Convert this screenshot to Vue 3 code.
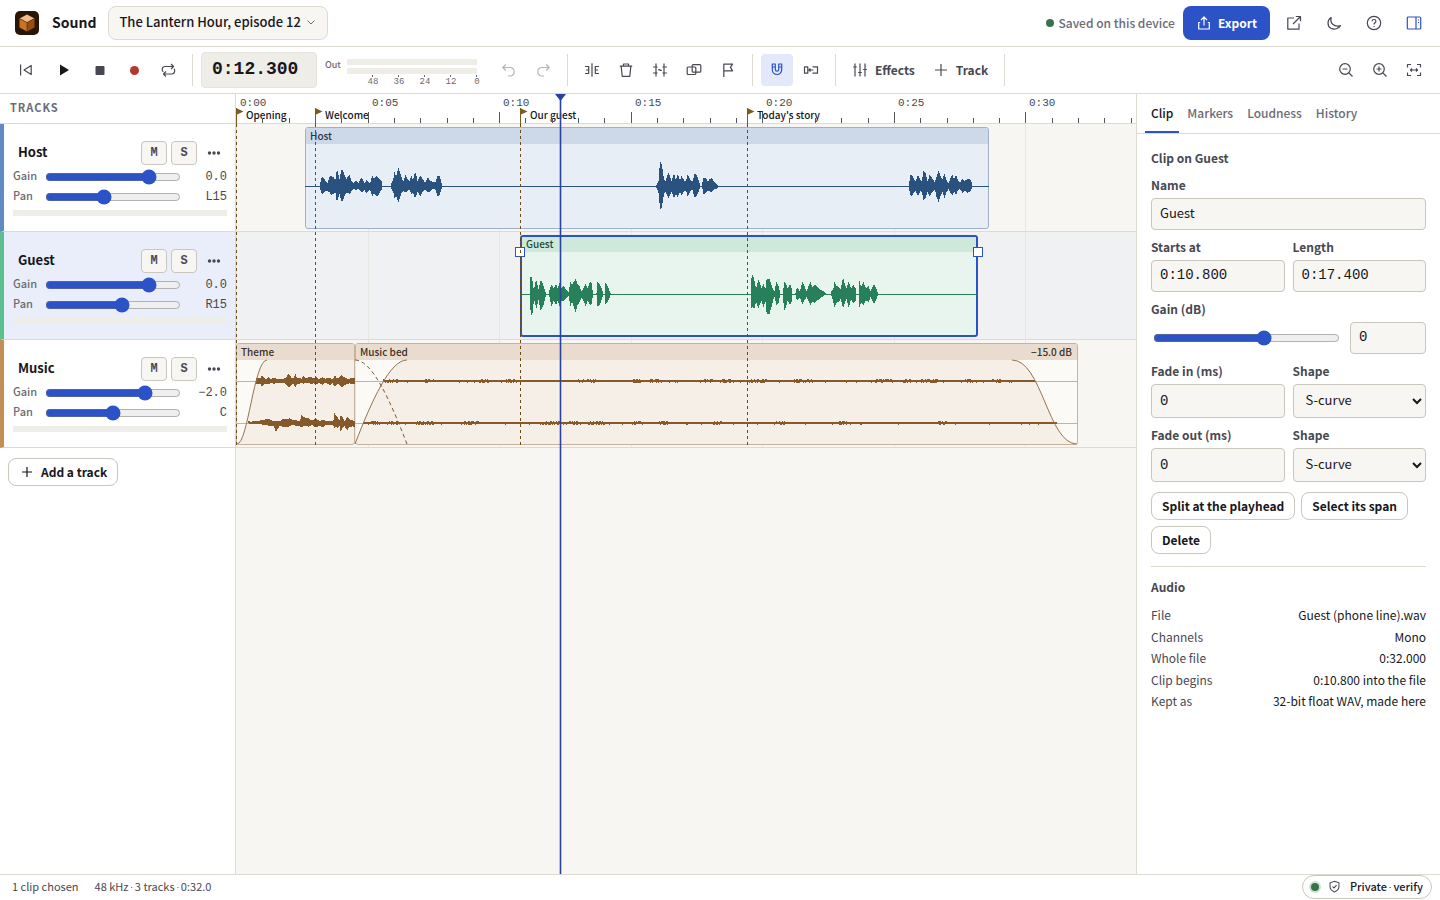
<script setup>
import { ref } from 'vue'

const PX_PER_SECOND = 900 / 34.2
const at = (seconds) => Math.round(seconds * PX_PER_SECOND)

const ticks = Array.from({ length: 35 }, (_, second) => ({
  x: at(second),
  major: second % 5 === 0,
  label: '0:' + String(second).padStart(2, '0')
}))

const markers = [
  { name: 'Opening', time: 0 },
  { name: 'Welcome', time: 3 },
  { name: 'Our guest', time: 10.8 },
  { name: "Today's story", time: 19.4 }
]
const playhead = 12.3

// Peak lists are flat triples: position, upper edge, lower edge, in thirds of a pixel.
const hostPeaks = [
  [0, 252,275,290,258,252,308,262,258,305,268,265,298,275,272,298,280,255,300,286,252,308,292,255,306,298,265,300,302,235,328,306,240,322,310,262,305,317,232,330,321,236,325,326,250,310,331,262,303,336,252,302,341,250,305,346,265,298,352,272,290,360,265,295,368,272,290,376,258,300,382,265,298,386,275,292,391,263,305,396,268,298,402,275,292,409,250,312,414,260,305,420,252,312,426,255,310,432,262,300,438,270,292],
  [0, 466,275,290,472,262,300,476,238,320,480,255,312,487,226,332,492,240,318,496,255,305,502,268,298,509,248,300,514,262,298,520,268,292,526,250,308,531,265,300,537,240,320,541,250,310,545,268,298,553,250,312,560,262,300,568,272,292,575,256,302,582,265,298,590,270,290,598,272,292,605,250,312,610,252,310,614,262,298,618,278,288],
  [762, 500,280,288,506,265,305,510,205,350,514,215,350,518,232,330,522,262,305,526,270,298,535,243,318,541,255,308,545,268,298,552,243,320,558,265,305,563,246,315,570,265,300,575,252,310,582,265,298,588,268,295,593,248,315,600,262,300,607,268,292,614,245,318,620,250,310,625,262,300,629,275,290],
  [762, 636,280,288,638,268,292,641,255,310,648,260,302,654,268,295,658,262,298,665,258,300,672,268,292,680,275,290,684,282,285],
  [1512, 507,278,290,511,250,310,516,248,312,522,262,300,527,268,296,534,248,312,541,262,298,545,268,300,551,234,325,557,245,318,563,268,300,569,248,312,576,258,300,585,272,292,588,258,310,596,235,330,603,255,308,608,262,300,613,243,318,620,265,300,626,275,290,630,262,300,637,248,310,642,262,298,648,248,308,654,265,295,660,272,290,667,260,302,674,268,296,682,260,302,690,262,300,695,272,290]
]
const guestPeaks = [
  [762, 120,600,610,121,555,650,124,553,672,128,570,660,131,590,630,135,580,625,138,562,655,142,575,640,146,595,620,150,570,650,153,565,655,158,575,645,163,590,630,168,604,608],
  [762, 177,600,610,180,590,622,185,578,645,191,590,625,198,575,640,203,590,625,209,570,642,215,590,625,220,582,628,228,592,620,236,600,612,241,568,642,246,580,630,250,572,640,257,560,660,262,575,640,268,582,632,275,598,618,280,590,625,287,575,642,293,590,625,300,570,640,305,575,635,309,604,608],
  [762, 320,604,608,322,568,642,328,575,640,333,585,630,338,598,612,339,604,608],
  [762, 345,604,608,346,573,638,352,580,632,357,592,622,361,604,608],
  [1512, 33,600,612,34,560,650,38,548,645,42,560,652,48,590,630,55,563,650,60,575,635,65,590,625,70,575,648,76,590,625,80,562,665,88,560,668,93,575,650,98,590,630,103,600,612,109,568,640,115,580,635,120,600,612],
  [1512, 129,602,610,130,590,630,133,570,655,138,575,645,143,590,625,150,575,638,155,588,630,156,604,608],
  [1512, 167,604,608,170,588,625,175,590,620,180,598,615,187,570,638,193,582,625,200,598,615,211,568,640,217,585,630,225,578,632,232,585,625,240,592,620,250,598,612,258,604,608],
  [1512, 273,604,608,274,598,612,280,590,630,283,570,645,290,582,632,297,585,628,302,592,620,309,556,648,314,575,635,319,590,620,326,568,648,333,590,622,340,578,635,347,590,625,348,604,608],
  [1512, 357,604,608,358,566,645,363,585,630,370,570,640,378,590,625,385,582,630,392,598,615,402,576,635,408,588,625,413,600,612]
]
const themePeaks = [
  [0, 62,128,148,68,130,146,74,128,148,78,122,155,84,128,148,90,132,146,98,126,148,105,132,144,115,128,146,125,132,143,135,132,144,145,130,145,152,125,150,158,115,157,163,122,154,168,130,148,174,130,148,178,115,158,182,128,148,190,128,146,196,132,143,202,124,146,210,130,144,218,126,145,225,126,146,234,130,145,240,126,148,250,132,144,260,126,150,268,132,143,276,128,148,283,130,150,290,132,145,297,122,155,303,130,148,310,128,148,317,120,157,324,126,152,330,130,148,340,132,145,348,128,148,355,130,146],
  [0, 38,258,265,45,260,268,55,257,266,65,258,268,75,256,268,85,254,270,100,250,272,106,256,274,112,258,272,120,258,290,126,258,280,132,258,272,140,252,276,150,252,276,160,250,274,170,255,270,180,256,272,192,258,274,196,240,276,202,246,274,210,248,272,218,250,276,224,254,272,230,256,270,236,252,276,242,252,276,250,258,272,260,254,276,270,258,270,280,258,270,292,258,270,295,232,280,300,242,276,306,248,278,310,258,272,314,240,290,320,248,278,326,258,274,334,244,286,340,252,276,345,256,278,350,256,274,355,258,276]
]

const noise = (n) => {
  const value = Math.sin(n * 127.1) * 43758.5453
  return value - Math.floor(value)
}

// One column per pixel: the edges are interpolated between the listed peaks.
function peakPath(bursts, top) {
  return bursts
    .map(([offset, ...values]) => {
      const points = []
      for (let i = 0; i < values.length; i += 3) {
        points.push([(values[i] + offset) / 3, values[i + 1] / 3 - top, values[i + 2] / 3 - top])
      }
      let path = ''
      let k = 0
      const last = points[points.length - 1][0]
      for (let x = Math.floor(points[0][0]); x < last; x += 1) {
        const centre = Math.max(x + 0.5, points[0][0])
        while (k < points.length - 2 && points[k + 1][0] < centre) k += 1
        const [x0, up0, low0] = points[k]
        const [x1, up1, low1] = points[k + 1]
        const t = Math.min(1, (centre - x0) / (x1 - x0))
        const up = Math.round(up0 + (up1 - up0) * t)
        const low = Math.round(low0 + (low1 - low0) * t)
        path += `M${x} ${up}h1V${Math.max(low, up + 1)}h-1Z`
      }
      return path
    })
    .join('')
}

// The music bed is quiet: a thin band with small irregular swells.
function bedPath(from, to, mid, seed) {
  let path = ''
  for (let x = from; x <= to; x += 1) {
    const swell = noise(Math.floor(x / 9) + seed) > 0.72 ? 1 : 0
    const up = swell && noise(x + seed) > 0.45 ? 1 : 0
    const low = (swell || noise(x / 3 + seed) > 0.85) && noise(x * 2 + seed) > 0.5 ? 1 : 0
    path += `M${x} ${mid - 1 - up}h1v${2 + up + low}h-1Z`
  }
  return path
}

const hostWave = peakPath(hostPeaks, 32)
const guestWave = peakPath(guestPeaks, 140)
const musicWave = peakPath(themePeaks, 5) + bedPath(147, 798, 41, 3) + bedPath(127, 820, 83, 40)

const tracks = ref([
  {
    name: 'Host', tone: 'host', gain: 0, gainText: '0.0', pan: -15, panText: 'L15',
    clips: [{ name: 'Host', start: 2.62, end: 28.6 }],
    lines: [{ y: 62, from: 2.62, to: 28.6 }], wave: hostWave, fades: []
  },
  {
    name: 'Guest', tone: 'guest', gain: 0, gainText: '0.0', pan: 15, panText: 'R15', selected: true,
    clips: [{ name: 'Guest', start: 10.8, end: 28.2, selected: true }],
    lines: [{ y: 62, from: 10.8, to: 28.2 }], wave: guestWave, fades: []
  },
  {
    name: 'Music', tone: 'music', gain: -2, gainText: '−2.0', pan: 0, panText: 'C',
    clips: [
      { name: 'Theme', start: 0, end: 4.52 },
      { name: 'Music bed', start: 4.52, end: 32, gain: '−15.0 dB' }
    ],
    lines: [{ y: 41, from: 0, to: 32 }, { y: 83, from: 0, to: 32 }],
    wave: musicWave,
    fades: [
      { shade: 'M1 104C12 104 18 20 31 20H1Z', edge: 'M1 104C12 104 18 20 31 20' },
      { shade: 'M119 104C136 60 154 20 171 20H119Z', edge: 'M119 104C136 60 154 20 171 20' },
      { shade: 'M776 20C806 20 812 104 841 104V20Z', edge: 'M776 20C806 20 812 104 841 104' }
    ],
    crossfade: 'M119 20C136 20 154 60 171 104'
  }
])

const tabs = ['Clip', 'Markers', 'Loudness', 'History']
const facts = [
  ['File', 'Guest (phone line).wav'],
  ['Channels', 'Mono'],
  ['Whole file', '0:32.000'],
  ['Clip begins', '0:10.800 into the file'],
  ['Kept as', '32-bit float WAV, made here']
]
const clipName = ref('Guest')
const startsAt = ref('0:10.800')
const lengthText = ref('0:17.400')
const clipGain = ref(0)
const fadeIn = ref('0')
const fadeOut = ref('0')
const meterScale = ['48', '36', '24', '12', '0']
</script>

<template>
  <div class="app">
    <header class="header">
      <svg class="logo" viewBox="0 0 24 24" aria-hidden="true">
        <rect width="24" height="24" rx="5" fill="#2a1606" />
        <path d="M12 3.5L19.5 7.5L12 11.5L4.5 7.5Z" fill="#f3b98a" />
        <path d="M4.5 7.5L12 11.5V20.5L4.5 16.5Z" fill="#c87423" />
        <path d="M19.5 7.5L12 11.5V20.5L19.5 16.5Z" fill="#95500f" />
        <path d="M4.5 7.5L12 11.5L19.5 7.5M12 11.5V20.5" fill="none" stroke="#4a2608" stroke-width=".6" />
      </svg>
      <h1 class="brand">Sound</h1>
      <button class="project" type="button">
        The Lantern Hour, episode 12
        <svg class="chevron" viewBox="0 0 12 12"><path d="M2.5 4.5L6 8L9.5 4.5" /></svg>
      </button>
      <div class="header-end">
        <span class="saved"><i class="dot"></i>Saved on this device</span>
        <button class="export" type="button">
          <svg class="icon" viewBox="0 0 16 16"><path d="M8 10.5V2.2M5 5L8 2L11 5M4.2 7.5H2.7V14H13.3V7.5H11.8" /></svg>
          Export
        </button>
        <button class="tool" type="button" aria-label="Open in a new window">
          <svg class="icon" viewBox="0 0 16 16"><path d="M8 3H1.8V14.2H13V8.5M9.8 1.5H14.5V6.2M14.5 1.5L7 9" /></svg>
        </button>
        <button class="tool" type="button" aria-label="Dark theme">
          <svg class="icon" viewBox="0 0 16 16"><path d="M5.2 2.6C1 5 1 11 4.8 13.2C8.5 15.2 12.8 13.6 14.4 10.6C8.5 12.6 3.6 8.4 5.2 2.6Z" /></svg>
        </button>
        <button class="tool" type="button" aria-label="Help">
          <svg class="icon" viewBox="0 0 16 16"><circle cx="8" cy="8" r="6.7" /><path d="M6.1 6.3C6.1 3.9 9.9 3.9 9.9 6.3C9.9 7.8 8 7.8 8 9.5M8 11V12" /></svg>
        </button>
        <button class="tool accent" type="button" aria-label="Inspector">
          <svg class="icon" viewBox="0 0 16 16"><rect x="1.3" y="2" width="13.4" height="12" rx="1" /><path d="M10 2V14M12 5H13M12 7.5H13" /></svg>
        </button>
      </div>
    </header>

    <div class="toolbar">
      <div class="group">
        <button class="tool" type="button" aria-label="To the start">
          <svg class="icon" viewBox="0 0 16 16"><path d="M2.6 2.5V13.5M13.2 3.5V12.5L6 8Z" /></svg>
        </button>
        <button class="tool play" type="button" aria-label="Play">
          <svg class="icon" viewBox="0 0 16 16"><path d="M5 2.5V13.5L14 8Z" class="solid" /></svg>
        </button>
        <button class="tool" type="button" aria-label="Stop">
          <svg class="icon" viewBox="0 0 16 16"><rect x="3.5" y="4" width="9" height="9" rx="1" class="solid" /></svg>
        </button>
        <button class="tool record" type="button" aria-label="Record">
          <svg class="icon" viewBox="0 0 16 16"><circle cx="8.5" cy="8.5" r="4.5" class="solid" /></svg>
        </button>
        <button class="tool" type="button" aria-label="Loop">
          <svg class="icon" viewBox="0 0 16 16"><path d="M11 2L13.5 4.5L11 7M13.5 4.5H5C1.6 4.5 1.6 9 3.4 9.8M6 14.5L3.5 12L6 9.5M3.5 12H12C15.2 12 15.2 7.6 13.8 6.8" /></svg>
        </button>
      </div>
      <span class="rule"></span>
      <output class="clock">0:12.300</output>
      <div class="out">
        <span class="out-name">Out</span>
        <div class="out-meter">
          <i class="bar"></i>
          <i class="bar"></i>
          <div class="scale"><span v-for="mark in meterScale" :key="mark">{{ mark }}</span></div>
        </div>
      </div>
      <div class="group">
        <button class="tool" type="button" aria-label="Undo" disabled>
          <svg class="icon" viewBox="0 0 16 16"><path d="M4.8 2.5L1.8 5.5L4.8 8.5M2 5.5H9.5A4.3 4.3 0 0 1 9.5 14H7" /></svg>
        </button>
        <button class="tool" type="button" aria-label="Redo" disabled>
          <svg class="icon" viewBox="0 0 16 16"><path d="M11.2 2.5L14.2 5.5L11.2 8.5M14 5.5H6.5A4.3 4.3 0 0 0 6.5 14H9" /></svg>
        </button>
      </div>
      <span class="rule"></span>
      <div class="group">
        <button class="tool" type="button" aria-label="Split">
          <svg class="icon" viewBox="0 0 16 16"><path d="M8 1.2V14.8M1 4.5H4.7V11.5H1M2 8H4.7M15 4.5H11.3V11.5H15M11.3 8H14" /></svg>
        </button>
        <button class="tool" type="button" aria-label="Delete">
          <svg class="icon" viewBox="0 0 16 16"><path d="M1.8 4.2H14.2M5.5 4V2H10.5V4M3.2 4.4L4.2 14.3H11.8L12.8 4.4" /></svg>
        </button>
        <button class="tool" type="button" aria-label="Trim">
          <svg class="icon" viewBox="0 0 16 16"><path d="M4 1.5V14.5M12 1.5V14.5M1 5H5.5M1 11H5.5M10.5 11H15M10.5 5H15" /><path d="M6.3 8.2Q7.2 7.2 8 8T9.7 7.8" /></svg>
        </button>
        <button class="tool" type="button" aria-label="Duplicate">
          <svg class="icon" viewBox="0 0 16 16"><rect x="1.2" y="5" width="8.6" height="7.5" rx="1" /><rect x="6.2" y="2.6" width="8.6" height="7.6" rx="1" /></svg>
        </button>
        <button class="tool" type="button" aria-label="Add a marker">
          <svg class="icon" viewBox="0 0 16 16"><path d="M3.8 15V2.2H12.6L10.4 5.4L12.6 8.8H3.8" /></svg>
        </button>
      </div>
      <span class="rule"></span>
      <div class="group">
        <button class="tool on" type="button" aria-label="Snap">
          <svg class="icon" viewBox="0 0 16 16"><path d="M3.3 2V7.8A4.7 4.7 0 0 0 12.7 7.8V2H9.7V7.5A1.7 1.7 0 0 1 6.3 7.5V2ZM3.3 5H6.3M9.7 5H12.7" /></svg>
        </button>
        <button class="tool" type="button" aria-label="Ripple">
          <svg class="icon" viewBox="0 0 16 16"><path d="M1.5 4.8H4.8V11.2H1.5ZM9.5 4.8H14.5V11.2H9.5M6 8H10.5M7.5 6.5L6 8L7.5 9.5" /></svg>
        </button>
      </div>
      <span class="rule"></span>
      <div class="group">
        <button class="tool wide" type="button">
          <svg class="icon" viewBox="0 0 16 16"><path d="M3 1.5V14.5M8 1.5V14.5M13 1.5V14.5M1.2 5H4.8M6.2 10.5H9.8M11.2 7.5H14.8" /></svg>
          Effects
        </button>
        <button class="tool wide" type="button">
          <svg class="icon" viewBox="0 0 16 16"><path d="M8 2V14M2 8H14" /></svg>
          Track
        </button>
      </div>
      <span class="rule"></span>
      <div class="group end">
        <button class="tool" type="button" aria-label="Zoom out">
          <svg class="icon" viewBox="0 0 16 16"><circle cx="7" cy="7" r="5.3" /><path d="M11 11L14.5 14.5M4.5 7H9.5" /></svg>
        </button>
        <button class="tool" type="button" aria-label="Zoom in">
          <svg class="icon" viewBox="0 0 16 16"><circle cx="7" cy="7" r="5.3" /><path d="M11 11L14.5 14.5M4.5 7H9.5M7 4.5V9.5" /></svg>
        </button>
        <button class="tool" type="button" aria-label="Fit">
          <svg class="icon" viewBox="0 0 16 16"><path d="M1.5 5.5V2.5H5M11 2.5H14.5V5.5M14.5 10.5V13.5H11M5 13.5H1.5V10.5M4.5 8H11.5M6 6.5L4.5 8L6 9.5M10 6.5L11.5 8L10 9.5" /></svg>
        </button>
      </div>
    </div>

    <main class="main">
      <section class="tracks">
        <h2 class="tracks-title">Tracks</h2>
        <article v-for="track in tracks" :key="track.name" class="track" :class="[track.tone, { selected: track.selected }]">
          <div class="track-head">
            <h3 class="track-name">{{ track.name }}</h3>
            <button class="switch" type="button" :aria-label="'Mute ' + track.name">M</button>
            <button class="switch" type="button" :aria-label="'Solo ' + track.name">S</button>
            <button class="more" type="button" :aria-label="'More for ' + track.name">
              <svg viewBox="0 0 14 4"><circle cx="2.5" cy="2" r="1.7" /><circle cx="7" cy="2" r="1.7" /><circle cx="11.5" cy="2" r="1.7" /></svg>
            </button>
          </div>
          <label class="knob">
            <span class="knob-name">Gain</span>
            <input v-model="track.gain" type="range" min="-48" max="12" step="0.5">
            <span class="knob-value">{{ track.gainText }}</span>
          </label>
          <label class="knob">
            <span class="knob-name">Pan</span>
            <input v-model="track.pan" type="range" min="-100" max="100">
            <span class="knob-value">{{ track.panText }}</span>
          </label>
          <div class="level"></div>
        </article>
        <button class="button add" type="button">
          <svg class="icon" viewBox="0 0 16 16"><path d="M8 3V13M3 8H13" /></svg>
          Add a track
        </button>
      </section>

      <section class="timeline">
        <svg class="ruler">
          <text v-for="tick in ticks.filter((t) => t.major)" :key="tick.label" class="time" :x="tick.x + 4" y="12">{{ tick.label }}</text>
          <text v-for="marker in markers" :key="marker.name" class="marker-name" :x="at(marker.time) + 10" y="25">{{ marker.name }}</text>
          <path v-for="tick in ticks.slice(1)" :key="tick.x" class="tick" :d="`M${tick.x + 0.5} ${tick.major ? 18 : 24}V29`" />
        </svg>
        <div v-for="track in tracks" :key="track.name" class="lane" :class="[track.tone, { selected: track.selected }]">
          <svg class="layer"><path v-for="tick in ticks.filter((t) => t.major)" :key="tick.x" class="grid" :d="`M${tick.x + 0.5} 0V107`" /></svg>
          <div
            v-for="clip in track.clips" :key="clip.name" class="clip" :class="{ chosen: clip.selected }"
            :style="{ left: at(clip.start) + 'px', width: at(clip.end) - at(clip.start) + 'px' }"
          >
            <div class="clip-title"><span>{{ clip.name }}</span><span>{{ clip.gain }}</span></div>
          </div>
          <svg class="layer">
            <path v-for="fade in track.fades" :key="fade.shade" class="shade" :d="fade.shade" />
            <path v-for="line in track.lines" :key="line.y" class="silence" :d="`M${at(line.from)} ${line.y + 0.5}H${at(line.to)}`" />
            <path class="wave" :d="track.wave" />
            <path v-for="fade in track.fades" :key="fade.edge" class="edge" :d="fade.edge" />
            <path v-if="track.crossfade" class="edge dashed" :d="track.crossfade" />
            <template v-for="clip in track.clips" :key="clip.name">
              <template v-if="clip.selected">
                <rect class="handle" :x="at(clip.start) - 4.5" y="15.5" width="9" height="9" />
                <rect class="handle" :x="at(clip.end) - 4.5" y="15.5" width="9" height="9" />
              </template>
            </template>
          </svg>
        </div>
        <svg class="layer over">
          <g v-for="marker in markers" :key="marker.name" :transform="`translate(${at(marker.time)} 0)`">
            <path class="flag" d="M0 14L7.5 17.5L0 21Z" />
            <path class="pole" d="M.5 14V30" />
            <path class="guide" d="M.5 30V352" />
          </g>
        </svg>
        <div class="playhead" :style="{ left: at(playhead) + 'px' }">
          <svg viewBox="0 0 11 7"><path d="M0 0H11L5.5 7Z" /></svg>
        </div>
      </section>

      <aside class="inspector">
        <nav class="tabs">
          <button v-for="(tab, i) in tabs" :key="tab" type="button" class="tab" :class="{ current: i === 0 }">{{ tab }}</button>
        </nav>
        <form class="form" @submit.prevent>
          <h2 class="heading">Clip on Guest</h2>
          <label class="field"><span>Name</span><input v-model="clipName" class="box plain" type="text"></label>
          <div class="pair">
            <label class="field"><span>Starts at</span><input v-model="startsAt" class="box" type="text"></label>
            <label class="field"><span>Length</span><input v-model="lengthText" class="box" type="text"></label>
          </div>
          <div class="field">
            <label for="clip-gain">Gain (dB)</label>
            <div class="gain-row">
              <input id="clip-gain" v-model="clipGain" type="range" min="-36" max="24">
              <input v-model="clipGain" class="box" type="text" aria-label="Gain in decibels">
            </div>
          </div>
          <div class="pair tall">
            <label class="field"><span>Fade in (ms)</span><input v-model="fadeIn" class="box" type="text"></label>
            <label class="field"><span>Shape</span><select class="box plain"><option>S-curve</option></select></label>
          </div>
          <div class="pair tall">
            <label class="field"><span>Fade out (ms)</span><input v-model="fadeOut" class="box" type="text"></label>
            <label class="field"><span>Shape</span><select class="box plain"><option>S-curve</option></select></label>
          </div>
          <div class="actions">
            <button class="button" type="button">Split at the playhead</button>
            <button class="button" type="button">Select its span</button>
            <button class="button" type="button">Delete</button>
          </div>
        </form>
        <section class="audio">
          <h2 class="heading">Audio</h2>
          <dl class="facts">
            <div v-for="[term, value] in facts" :key="term" class="fact"><dt>{{ term }}</dt><dd>{{ value }}</dd></div>
          </dl>
        </section>
      </aside>
    </main>

    <footer class="status">
      <span>1 clip chosen</span>
      <span>48 kHz<span class="mid"> · </span>3 tracks<span class="mid"> · </span>0:32.0</span>
      <button class="private" type="button">
        <i class="dot halo"></i>
        <svg class="shield" viewBox="0 0 16 16"><path d="M8 1.5L13.5 3.5V8C13.5 11.5 11 13.5 8 14.7C5 13.5 2.5 11.5 2.5 8V3.5ZM5.5 8L7.3 9.8L10.6 6.3" /></svg>
        <span>Private<span class="mid"> · </span>verify</span>
      </button>
    </footer>
  </div>
</template>

<style>
body {
  margin: 0;
}
</style>

<style scoped>
.app {
  --mono: "Liberation Mono", monospace;
  --ink: #17171c;
  --soft: #484852;
  --dim: #6b6b74;
  --line: #dddad2;
  --edge: #c9c6bd;
  --sand: #f8f6f2;
  --well: #efede8;
  --accent: #2c52c8;
  display: flex;
  flex-direction: column;
  height: 100vh;
  overflow: hidden;
  background: #fff;
  color: var(--ink);
  font-family: "Noto Sans CJK SC", "Noto Sans", sans-serif;
  font-size: 12px;
  line-height: 1.5;
}
.app * {
  box-sizing: border-box;
}
button,
input,
select {
  font: inherit;
  color: inherit;
  margin: 0;
}
button {
  padding: 0;
  border: 0;
  background: none;
  white-space: nowrap;
}
h1,
h2,
h3,
dl,
dd {
  margin: 0;
}
input[type="range"] {
  accent-color: var(--accent);
  height: 16px;
  min-width: 0;
}
.icon {
  width: 16px;
  height: 16px;
  flex: none;
  fill: none;
  stroke: currentColor;
  stroke-width: 1.2;
  stroke-linejoin: round;
}
.icon .solid {
  fill: currentColor;
  stroke: none;
}
.mid {
  font-family: "Noto Sans", sans-serif;
  font-size: 8px;
}

.header {
  display: flex;
  align-items: center;
  flex: none;
  height: 47px;
  padding: 0 10px 0 15px;
  border-bottom: 1px solid var(--line);
}
.logo {
  width: 24px;
  height: 24px;
}
.brand {
  margin: 0 12px 2px 13px;
  font-size: 14px;
  font-weight: 700;
}
.project {
  display: flex;
  align-items: center;
  gap: 4px;
  height: 34px;
  padding: 0 10px 2px;
  border: 1px solid var(--line);
  border-radius: 8px;
  background: var(--sand);
  font-size: 13px;
  font-weight: 500;
}
.chevron {
  width: 12px;
  height: 12px;
  fill: none;
  stroke: var(--dim);
}
.header-end {
  display: flex;
  align-items: center;
  gap: 8px;
  margin-left: auto;
}
.saved {
  display: flex;
  align-items: center;
  gap: 4px;
  color: var(--dim);
  font-weight: 500;
}
.dot {
  width: 8px;
  height: 8px;
  border-radius: 50%;
  background: #37734a;
}
.export {
  display: flex;
  align-items: center;
  gap: 6px;
  height: 34px;
  padding: 0 13px;
  border-radius: 8px;
  background: var(--accent);
  color: #fff;
  font-weight: 700;
}
.tool {
  display: flex;
  align-items: center;
  justify-content: center;
  width: 32px;
  height: 32px;
  border-radius: 4px;
  color: var(--soft);
}
.tool:disabled {
  opacity: 0.4;
}
.tool.accent {
  color: var(--accent);
}
.tool.play {
  width: 38px;
  color: var(--ink);
}
.tool.record {
  color: #b23a2c;
}
.tool.on {
  background: #e3e9fa;
  color: var(--accent);
}
.tool.wide {
  width: auto;
  gap: 7px;
  padding: 0 8px;
  font-weight: 700;
}

.toolbar {
  display: flex;
  align-items: center;
  gap: 8px;
  flex: none;
  height: 47px;
  padding: 0 10px;
  border-bottom: 1px solid var(--line);
}
.group {
  display: flex;
  gap: 2px;
}
.group.end {
  margin-left: auto;
}
.rule {
  width: 1px;
  height: 32px;
  background: var(--line);
}
.clock {
  width: 116px;
  height: 36px;
  padding-left: 10px;
  border: 1px solid #e6e3dc;
  border-radius: 4px;
  background: var(--well);
  font: 700 18px/32px var(--mono);
}
.out {
  display: flex;
  gap: 6px;
  margin-right: 8px;
  padding-top: 6px;
}
.out-name {
  color: var(--dim);
  font-size: 9px;
  font-weight: 500;
  line-height: 12px;
}
.out-meter {
  display: flex;
  flex-direction: column;
  gap: 3px;
  width: 130px;
}
.bar {
  height: 6px;
  background: var(--well);
}
.scale {
  display: grid;
  grid-template-columns: repeat(5, 1fr);
  margin: -2px -13px 0 13px;
  color: var(--dim);
  font: 9px/10px var(--mono);
  text-align: center;
}
.scale span {
  padding-top: 2px;
  background: linear-gradient(var(--dim), var(--dim)) center top / 1px 2px no-repeat;
}

.main {
  display: flex;
  flex: 1;
  min-height: 0;
}
.tracks {
  flex: none;
  width: 236px;
  border-right: 1px solid var(--line);
}
.tracks-title {
  height: 30px;
  padding-left: 10px;
  border-bottom: 1px solid var(--line);
  color: var(--dim);
  font-size: 11px;
  font-weight: 700;
  letter-spacing: 1px;
  line-height: 26px;
  text-transform: uppercase;
}
.track {
  height: 108px;
  padding: 16px 8px 0 9px;
  border-bottom: 1px solid var(--line);
  border-left: 4px solid #5f8ac4;
}
.track.guest {
  border-left-color: #5cc091;
}
.track.music {
  border-left-color: #c48f56;
}
.track.selected {
  background: #e9eefa;
}
.track-head {
  display: flex;
  align-items: center;
  gap: 4px;
  height: 26px;
  margin-bottom: 1px;
}
.track-name {
  flex: 1;
  padding: 0 0 3px 5px;
  font-size: 13px;
  font-weight: 700;
}
.switch {
  width: 26px;
  height: 24px;
  border: 1px solid var(--edge);
  border-radius: 4px;
  background: var(--sand);
  color: var(--soft);
  font: 700 12px/20px var(--mono);
}
.more {
  display: flex;
  align-items: center;
  justify-content: center;
  width: 26px;
  height: 24px;
  fill: var(--soft);
}
.more svg {
  width: 14px;
  height: 4px;
}
.knob {
  display: flex;
  align-items: center;
  height: 20px;
}
.knob-name {
  width: 32px;
  padding-bottom: 4px;
  color: var(--dim);
  font-size: 11px;
  font-weight: 500;
}
.knob input {
  width: 136px;
}
.knob-value {
  margin-left: auto;
  color: var(--soft);
  font: 12px/16px var(--mono);
}
.level {
  height: 6px;
  margin-top: 3px;
  background: var(--well);
}
.button {
  display: inline-flex;
  align-items: center;
  gap: 6px;
  height: 28px;
  padding: 0 10px 1px;
  border: 1px solid var(--edge);
  border-radius: 8px;
  background: #fff;
  font-weight: 700;
}
.add {
  margin: 10px 8px;
}

.timeline {
  position: relative;
  flex: 1;
  min-width: 0;
  overflow: hidden;
  background: var(--sand);
}
.ruler {
  display: block;
  width: 100%;
  height: 30px;
  border-bottom: 1px solid var(--line);
  background: #fff;
}
.time {
  fill: var(--soft);
  font: 11px var(--mono);
}
.tick {
  stroke: #55555c;
}
.marker-name {
  fill: var(--ink);
  font-size: 10px;
  font-weight: 500;
}
.lane {
  --body: #e7eef6;
  --band: #cdd9e9;
  --rim: #9db1cb;
  --wave: #2a527f;
  position: relative;
  height: 108px;
  border-bottom: 1px solid var(--line);
}
.lane.guest {
  --body: #e7f5ee;
  --band: #cfe8dc;
  --wave: #28805a;
}
.lane.music {
  --body: #f6efe8;
  --band: #e9dccf;
  --rim: #c9b29b;
  --wave: #85592a;
}
.lane.selected {
  background: #f0f1f3;
}
.layer {
  position: absolute;
  inset: 0;
  width: 100%;
  height: 100%;
  pointer-events: none;
}
.grid {
  stroke: #e8e7e4;
}
.clip {
  position: absolute;
  top: 3px;
  bottom: 2px;
  border: 1px solid var(--rim);
  border-radius: 3px;
  overflow: hidden;
  background: var(--body);
}
.clip.chosen {
  border: 2px solid var(--accent);
}
.clip-title {
  display: flex;
  justify-content: space-between;
  height: 16px;
  padding: 0 5px 0 4px;
  background: var(--band);
  color: #3a3027;
  font-size: 10px;
  font-weight: 500;
  line-height: 16px;
}
.chosen .clip-title {
  height: 15px;
  padding: 0 4px;
  line-height: 14px;
}
.host .clip-title {
  color: #24374e;
}
.guest .clip-title {
  color: #1d4a36;
}
.silence {
  stroke: var(--wave);
}
.music .silence {
  stroke: #c9b29b;
}
.wave {
  fill: var(--wave);
}
.shade {
  fill: #fff;
  fill-opacity: 0.65;
}
.edge {
  fill: none;
  stroke: #94744f;
}
.edge.dashed {
  stroke: #7a5a36;
  stroke-dasharray: 4 3;
}
.handle {
  fill: #fff;
  stroke: var(--accent);
}
.flag {
  fill: #7d5a1a;
}
.pole {
  stroke: #7d5a1a;
}
.guide {
  stroke: #6b4a1c;
  stroke-dasharray: 3 3;
}
.playhead {
  position: absolute;
  top: 0;
  bottom: 0;
  width: 1px;
  background: #2742a0;
  box-shadow: 0 0 0 1px rgba(39, 66, 160, 0.3);
}
.playhead svg {
  position: absolute;
  top: 0;
  left: -5px;
  width: 11px;
  height: 7px;
  fill: #2742a0;
}

.inspector {
  flex: none;
  width: 304px;
  border-left: 1px solid var(--line);
}
.tabs {
  display: flex;
  gap: 2px;
  height: 40px;
  padding: 0 8px;
  border-bottom: 1px solid var(--line);
}
.tab {
  padding: 0 6px;
  border-bottom: 2px solid transparent;
  color: var(--dim);
  font-weight: 500;
}
.tab.current {
  border-bottom-color: var(--accent);
  color: var(--ink);
}
.form {
  display: flex;
  flex-direction: column;
  gap: 8px;
  margin: 0 14px;
  padding: 14px 0 12px;
  border-bottom: 1px solid var(--line);
}
.heading {
  color: var(--soft);
  font-size: 12px;
  font-weight: 700;
  line-height: 20px;
}
.field {
  display: flex;
  flex-direction: column;
  gap: 4px;
  color: var(--soft);
  font-size: 12px;
  font-weight: 700;
  line-height: 18px;
  min-width: 0;
}
.box {
  width: 100%;
  height: 32px;
  padding: 0 8px 2px;
  border: 1px solid var(--edge);
  border-radius: 4px;
  background: var(--sand);
  color: var(--ink);
  font: 14px var(--mono);
}
.tall .box {
  height: 34px;
  padding-bottom: 0;
}
.box.plain {
  padding-bottom: 3px;
  font: 400 13px "Noto Sans CJK SC", "Noto Sans", sans-serif;
}
.pair {
  display: grid;
  grid-template-columns: 1fr 1fr;
  gap: 8px;
}
.gain-row {
  display: grid;
  grid-template-columns: 1fr 76px;
  align-items: center;
  gap: 10px;
  padding-left: 2px;
}
.actions {
  display: flex;
  flex-wrap: wrap;
  gap: 6px;
  padding-top: 2px;
}
.audio {
  padding: 10px 14px 0;
}
.facts {
  margin-top: 7px;
  line-height: 1.8;
}
.fact {
  display: flex;
  justify-content: space-between;
}
.fact dt {
  color: var(--soft);
}

.status {
  display: flex;
  align-items: center;
  gap: 16px;
  flex: none;
  height: 26px;
  padding: 0 8px 2px 12px;
  border-top: 1px solid var(--line);
  color: var(--soft);
  font-size: 11px;
}
.private {
  display: flex;
  align-items: center;
  gap: 9px;
  height: 24px;
  margin-left: auto;
  padding: 0 8px;
  border: 1px solid var(--edge);
  border-radius: 12px;
  color: var(--ink);
  font-size: 11px;
  font-weight: 500;
}
.halo {
  box-shadow: 0 0 0 2px #cfe5d4;
}
.shield {
  width: 13px;
  height: 13px;
  fill: none;
  stroke: var(--soft);
  stroke-width: 1.3;
}
</style>
